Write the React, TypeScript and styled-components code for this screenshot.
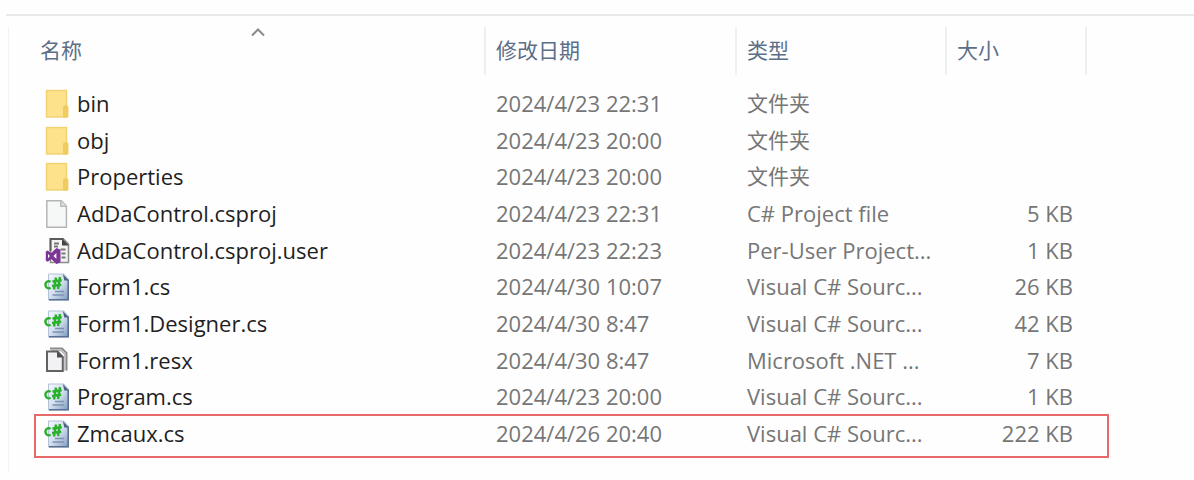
import React from "react";
import styled, { createGlobalStyle } from "styled-components";

const GlobalStyle = createGlobalStyle`
  *, *::before, *::after { box-sizing: border-box; }
  body { margin: 0; background: #fefefe; }
`;

const Page = styled.main`
  padding-top: 14px;
  font-family: "Open Sans", "Noto Sans CJK SC", sans-serif;
  font-size: 22px;
  color: #767676;
`;

const Pane = styled.section`
  margin-left: 6px;
  padding-top: 11px;
  border-top: 2px solid #e9e9e9;
`;

const Frame = styled.div`
  margin-left: 2px;
  padding-bottom: 20px;
  border-left: 1px solid #f3f3f3;
`;

const FileTable = styled.table`
  width: 100%;
  table-layout: fixed;
  border-collapse: separate;
  border-spacing: 0;
`;

const Column = styled.col<{ $width?: number }>`
  width: ${(p) => (p.$width ? `${p.$width}px` : "auto")};
`;

const HeadRow = styled.tr`
  height: 48px;
`;

const HeadCell = styled.th<{ $first?: boolean }>`
  height: 48px;
  padding: 0 0 0 ${(p) => (p.$first ? 23 : 0)}px;
  border-right: 2px solid #efefef;
  text-align: left;
  font-weight: 400;
`;

const SortButton = styled.button<{ $first?: boolean }>`
  position: relative;
  display: flex;
  align-items: center;
  width: 100%;
  height: 48px;
  padding: 0 0 4px ${(p) => (p.$first ? 8 : 10)}px;
  border: 0;
  background: none;
  font: inherit;
  font-size: 21px;
  color: #5c6f88;
`;

const SortArrow = styled.svg`
  position: absolute;
  top: 0;
  left: 50%;
  width: 16px;
  height: 10px;
  margin-left: -8px;
`;

const Body = styled.tbody`
  &::before {
    content: "";
    display: table-row;
    height: 10px;
  }
`;

const FileRow = styled.tr<{ $marked?: boolean }>`
  position: relative;
  height: 37px;

  &:nth-child(3n) {
    height: 36px;
  }

  ${(p) =>
    p.$marked &&
    `&::after {
      content: "";
      position: absolute;
      top: -1px;
      bottom: -6px;
      left: 25px;
      right: 85px;
      border: 2px solid #e66a6a;
      pointer-events: none;
    }`}
`;

const Cell = styled.td<{ $right?: boolean; $han?: boolean }>`
  padding: 0 ${(p) => (p.$right ? 14 : 0)}px 2px ${(p) => (p.$right ? 0 : 10)}px;
  text-align: ${(p) => (p.$right ? "right" : "left")};
  font-size: ${(p) => (p.$han ? 21 : 22)}px;
  line-height: 34px;
  white-space: nowrap;
  overflow: hidden;
`;

const NameCell = styled.td`
  padding: 0 0 0 34px;
`;

const Name = styled.div`
  display: flex;
  align-items: center;
  gap: 7px;
  color: #1f1f1f;
  white-space: nowrap;
`;

const NameText = styled.span`
  padding-bottom: 2px;
  line-height: 34px;
`;

const Icon = styled.svg`
  flex: none;
  width: 27px;
  height: 30px;
`;

type Kind = "folder" | "blank" | "vs" | "cs" | "resx";

function FileIcon({ kind }: { kind: Kind }) {
  return (
    <Icon viewBox="0 0 27 30" aria-hidden="true">
      {kind === "cs" && (
        <defs>
          <linearGradient id="sheet" x1="0" y1="0" x2="1" y2="1">
            <stop offset="0" stopColor="#f4f8fd" />
            <stop offset="0.5" stopColor="#d3dfef" />
            <stop offset="1" stopColor="#8099bd" />
          </linearGradient>
        </defs>
      )}
      {kind === "folder" && (
        <>
          <rect x="3.5" y="1.5" width="20" height="26.5" fill="#fde28b" stroke="#f0d271" strokeWidth="1.4" />
          <path d="M20 28.6v-11l3-2 2.4 2v11z" fill="#efcb60" />
        </>
      )}
      {kind === "blank" && (
        <>
          <path d="M3.8 1.8h14.4l5.2 5.2v21.2H3.8z" fill="#f6f7f7" stroke="#b4b6b8" strokeWidth="1.5" />
          <path d="M17.8 1.8v5.6h5.6" fill="#dcdddd" stroke="#b4b6b8" strokeWidth="1.3" />
        </>
      )}
      {kind === "vs" && (
        <>
          <path d="M7.5 3h13l5 5v18.5h-18z" fill="#f3f3f3" stroke="#8a8a8a" strokeWidth="1.5" />
          <path d="M7.5 15V3h13" fill="none" stroke="#5c5c5c" strokeWidth="2" />
          <path d="M19 2.5l7 7h-7z" fill="#444" />
          <path d="M11 7.5h5M11 10.5h4M17.5 13.5h5M18.5 17.5h4M18.5 21.5h4" stroke="#777" strokeWidth="2" />
          <path
            fillRule="evenodd"
            d="M13.5 12l4 1.8v12.4L13.5 28l-5.3-5-3.4 2.7-2-1V15.400l2-1 3.400 2.700zM13.400 17l-3 3 3 3zM5 18v4.200l2-2.100z"
            fill="#7c3596"
          />
        </>
      )}
      {kind === "cs" && (
        <>
          <path d="M5.5 2h15.300l4.600 5v21H5.500z" fill="url(#sheet)" stroke="#b4c3d8" strokeWidth="1" />
          <path d="M25.200 7.500v20.300H6" fill="none" stroke="#5b7194" strokeWidth="1.600" />
          <path d="M19.800 2l6 6.400h-4.400z" fill="#4a5f80" />
          <path d="M12 19.500h9M9.500 23h11.500" stroke="#7c92b2" strokeWidth="1.500" />
          <path d="M7.500 10A3 3.600 0 1 0 7.500 15.500" fill="none" stroke="#2bb02b" strokeWidth="2.400" />
          <path d="M13 5.500l-2 12M17 5l-2 12M9.500 9.500l9.200-1.300M9 14l9.200-1.300" stroke="#2bb02b" strokeWidth="2.400" />
        </>
      )}
      {kind === "resx" && (
        <>
          <path d="M7 2.5h12l4.500 4.500v17.500" fill="none" stroke="#8a8a8a" strokeWidth="2" />
          <path d="M8 4.500h10l4 4v16" fill="none" stroke="#b5b5b5" strokeWidth="1.500" />
          <path d="M4 5.500h10.500l5.300 5.300v14.200H4z" fill="#f2f2f4" stroke="#626262" strokeWidth="2" />
          <path d="M14 5v6.500h6.500z" fill="#505050" />
        </>
      )}
    </Icon>
  );
}

interface FileEntry {
  kind: Kind;
  name: string;
  date: string;
  type: string;
  size?: string;
  marked?: boolean;
}

const files: FileEntry[] = [
  { kind: "folder", name: "bin", date: "2024/4/23 22:31", type: "文件夹" },
  { kind: "folder", name: "obj", date: "2024/4/23 20:00", type: "文件夹" },
  { kind: "folder", name: "Properties", date: "2024/4/23 20:00", type: "文件夹" },
  { kind: "blank", name: "AdDaControl.csproj", date: "2024/4/23 22:31", type: "C# Project file", size: "5 KB" },
  { kind: "vs", name: "AdDaControl.csproj.user", date: "2024/4/23 22:23", type: "Per-User Project...", size: "1 KB" },
  { kind: "cs", name: "Form1.cs", date: "2024/4/30 10:07", type: "Visual C# Sourc...", size: "26 KB" },
  { kind: "cs", name: "Form1.Designer.cs", date: "2024/4/30 8:47", type: "Visual C# Sourc...", size: "42 KB" },
  { kind: "resx", name: "Form1.resx", date: "2024/4/30 8:47", type: "Microsoft .NET ...", size: "7 KB" },
  { kind: "cs", name: "Program.cs", date: "2024/4/23 20:00", type: "Visual C# Sourc...", size: "1 KB" },
  { kind: "cs", name: "Zmcaux.cs", date: "2024/4/26 20:40", type: "Visual C# Sourc...", size: "222 KB", marked: true },
];

export default function App() {
  return (
    <>
      <GlobalStyle />
      <Page>
        <Pane>
          <Frame>
            <FileTable>
              <colgroup>
                <Column />
                <Column $width={251} />
                <Column $width={210} />
                <Column $width={140} />
                <Column $width={107} />
              </colgroup>
              <thead>
                <HeadRow>
                  <HeadCell $first scope="col" aria-sort="ascending">
                    <SortButton $first type="button">
                      名称
                      <SortArrow viewBox="0 0 16 10" aria-hidden="true">
                        <path d="M2 8.500l6-6 6 6" fill="none" stroke="#8a8a8a" strokeWidth="2" />
                      </SortArrow>
                    </SortButton>
                  </HeadCell>
                  {["修改日期", "类型", "大小"].map((label) => (
                    <HeadCell key={label} scope="col">
                      <SortButton type="button">{label}</SortButton>
                    </HeadCell>
                  ))}
                </HeadRow>
              </thead>
              <Body>
                {files.map((f) => (
                  <FileRow key={f.name} $marked={f.marked}>
                    <NameCell>
                      <Name>
                        <FileIcon kind={f.kind} />
                        <NameText>{f.name}</NameText>
                      </Name>
                    </NameCell>
                    <Cell>{f.date}</Cell>
                    <Cell $han={f.kind === "folder"}>{f.type}</Cell>
                    <Cell $right>{f.size}</Cell>
                  </FileRow>
                ))}
              </Body>
            </FileTable>
          </Frame>
        </Pane>
      </Page>
    </>
  );
}
